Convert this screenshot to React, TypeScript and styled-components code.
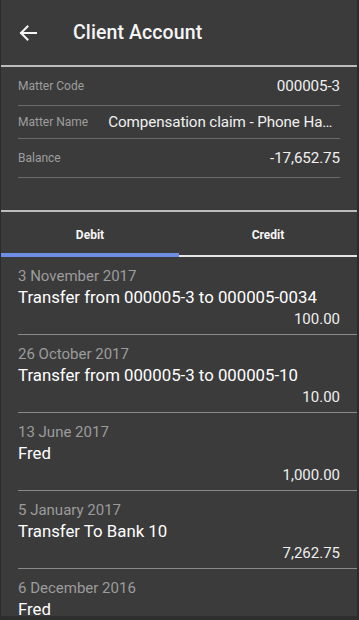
import styled, { createGlobalStyle } from "styled-components";

const GlobalStyle = createGlobalStyle`
  html, body {
    margin: 0;
    padding: 0;
    background: #2a2a2a;
  }
  body {
    font-family: Roboto, "Noto Sans", "Liberation Sans", sans-serif;
    -webkit-font-smoothing: antialiased;
  }
`;

const Screen = styled.div`
  box-sizing: border-box;
  width: 359px;
  height: 620px;
  overflow: hidden;
  background: #3b3b3b;
  border-left: 1px solid #2c2c2c;
  border-right: 2px solid #2c2c2c;
  border-bottom: 4px solid #2e2e2e;
  color: #f2f2f2;
`;

const Header = styled.header`
  display: flex;
  align-items: center;
  height: 65px;
  padding-left: 17px;
  border-bottom: 2px solid #bcbcbc;
`;

const BackButton = styled.button`
  display: flex;
  align-items: center;
  justify-content: center;
  width: 20px;
  height: 20px;
  padding: 0;
  margin: 0 35px 0 0;
  border: none;
  background: none;
  color: #f5f5f5;
`;

const Title = styled.h1`
  margin: 0;
  font-size: 19.5px;
  font-weight: 500;
  color: #f5f5f5;
  letter-spacing: 0.1px;
`;

const InfoList = styled.section`
  padding: 0 17px 32px;
  border-bottom: 2px solid #bcbcbc;
`;

const InfoRow = styled.div<{ $h: number }>`
  display: flex;
  align-items: center;
  justify-content: space-between;
  gap: 20px;
  height: ${(p) => p.$h}px;
  border-bottom: 1px solid #6a6a6a;
`;

const Label = styled.span`
  flex-shrink: 0;
  font-size: 12px;
  color: #9e9e9e;
`;

const Value = styled.span`
  min-width: 0;
  font-size: 15.2px;
  letter-spacing: -0.1px;
  color: #f0f0f0;
  white-space: nowrap;
  overflow: hidden;
  text-overflow: ellipsis;
`;

const Tabs = styled.nav`
  display: flex;
  height: 45px;
`;

const Tab = styled.div<{ $active?: boolean }>`
  flex: 1;
  display: flex;
  align-items: center;
  justify-content: center;
  box-sizing: border-box;
  padding-top: 5px;
  padding-bottom: ${(p) => (p.$active ? 0 : 2)}px;
  font-size: 12px;
  font-weight: 700;
  color: #f5f5f5;
  border-bottom: ${(p) => (p.$active ? "4px solid #6f8fe4" : "2px solid #e6e6e6")};
`;

const Entry = styled.article`
  margin-left: 17px;
  padding: 9px 17px 5px 0;
  border-bottom: 1px solid #8a8a8a;
`;

const EntryDate = styled.div`
  font-size: 15px;
  line-height: 20px;
  color: #9c9c9c;
`;

const EntryTitle = styled.div`
  font-size: 16.8px;
  line-height: 23px;
  color: #ffffff;
`;

const EntryAmount = styled.div`
  font-size: 15px;
  line-height: 20px;
  text-align: right;
  color: #eeeeee;
`;

const entries = [
  { date: "3 November 2017", title: "Transfer from 000005-3 to 000005-0034", amount: "100.00" },
  { date: "26 October 2017", title: "Transfer from 000005-3 to 000005-10", amount: "10.00" },
  { date: "13 June 2017", title: "Fred", amount: "1,000.00" },
  { date: "5 January 2017", title: "Transfer To Bank 10", amount: "7,262.75" },
  { date: "6 December 2016", title: "Fred", amount: "500.00" },
];

export default function App() {
  return (
    <>
      <GlobalStyle />
      <Screen>
        <Header>
          <BackButton aria-label="Back">
            <svg width="18" height="18" viewBox="0 0 18 18" fill="none">
              <path
                d="M17 9H2M8.5 2.5L2 9l6.5 6.5"
                stroke="currentColor"
                strokeWidth="2"
                strokeLinecap="square"
              />
            </svg>
          </BackButton>
          <Title>Client Account</Title>
        </Header>
        <InfoList>
          <InfoRow $h={38}>
            <Label>Matter Code</Label>
            <Value>000005-3</Value>
          </InfoRow>
          <InfoRow $h={32}>
            <Label>Matter Name</Label>
            <Value>Compensation claim - Phone Hacking</Value>
          </InfoRow>
          <InfoRow $h={38}>
            <Label>Balance</Label>
            <Value>-17,652.75</Value>
          </InfoRow>
        </InfoList>
        <Tabs>
          <Tab $active>Debit</Tab>
          <Tab>Credit</Tab>
        </Tabs>
        {entries.map((e) => (
          <Entry key={e.date}>
            <EntryDate>{e.date}</EntryDate>
            <EntryTitle>{e.title}</EntryTitle>
            <EntryAmount>{e.amount}</EntryAmount>
          </Entry>
        ))}
      </Screen>
    </>
  );
}
